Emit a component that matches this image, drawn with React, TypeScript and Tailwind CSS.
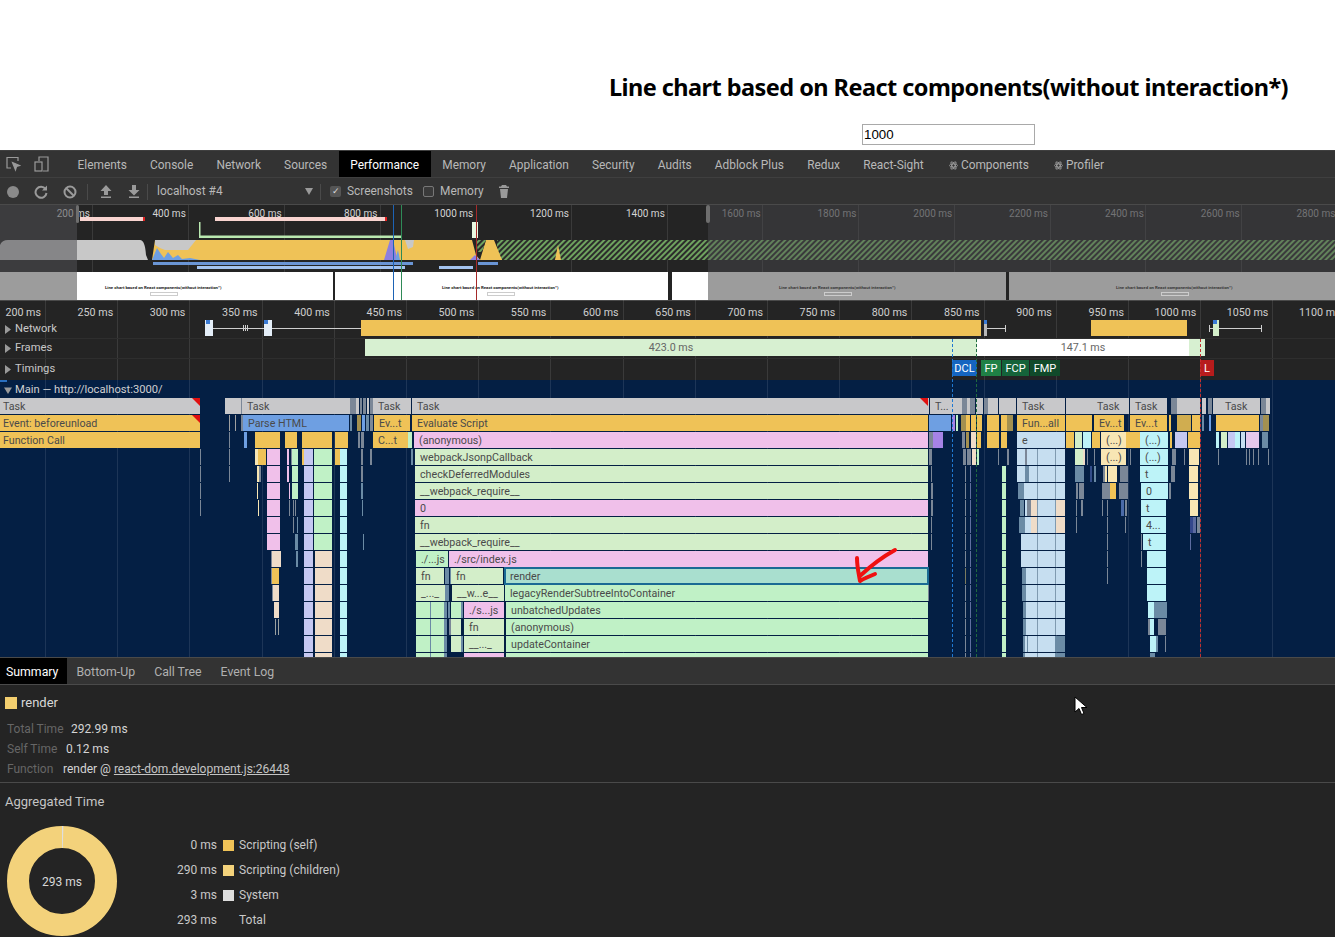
const ORANGE = "#efc257";
const GREY = "#c8c8ca";
const DARK = "#7b8797";
const PINK = "#f0c0ea";
const LEAF = "#d3eec9";
const MINT = "#c0f1c6";
const CYAN = "#bdf3f8";
const SKY = "#c6def0";
const LAV = "#c5c8f2";
const PEACH = "#efdcc8";
const CREAM = "#f8e6b4";
const BLUE = "#6e9fe2";
const PURPLE = "#a583e6";
const SLATE = "#6b8ba5";

type Bar = [number, number, string, string?];

function bars(from: number, to: number, list: Bar[]) {
  const out: Record<number, Bar[]> = {};
  for (let r = from; r <= to; r++) out[r] = list;
  return out;
}

const columns: Record<number, Bar[]>[] = [
  bars(3, 15, [
    [304, 9, LAV],
    [340, 7, CYAN],
    [1025, 40, SKY],
    [1037, 1, "#7f9ab0"],
    [1055, 1, "#7f9ab0"],
  ]),
  bars(3, 8, [
    [267, 13, PINK],
    [314, 18, MINT],
  ]),
  bars(9, 15, [[315, 17, PEACH]]),
  bars(4, 15, [
    [1002, 4, MINT],
    [965, 1, DARK],
    [970, 1, "#5f6f9f"],
  ]),
  bars(11, 15, [
    [416, 29, MINT],
    [430, 1, SLATE],
    [444, 3, SLATE],
  ]),
];

const flame: Record<number, Bar[]> = {
  0: [
    [0, 200, GREY, "Task"],
    [225, 16, GREY],
    [241, 1, DARK],
    [242, 108, GREY, "Task"],
    [350, 6, DARK],
    [356, 3, GREY],
    [360, 2, DARK],
    [363, 3, DARK],
    [367, 2, GREY],
    [370, 3, DARK],
    [373, 38, GREY, "Task"],
    [412, 517, GREY, "Task"],
    [930, 21, GREY, "T..."],
    [951, 11, GREY],
    [962, 5, DARK],
    [967, 3, GREY],
    [970, 5, DARK],
    [976, 7, GREY],
    [984, 4, DARK],
    [988, 10, GREY],
    [999, 17, GREY],
    [1017, 48, GREY, "Task"],
    [1066, 26, GREY],
    [1092, 37, GREY, "Task"],
    [1130, 37, GREY, "Task"],
    [1171, 6, DARK],
    [1177, 23, GREY],
    [1202, 4, GREY],
    [1208, 4, DARK],
    [1213, 7, GREY],
    [1220, 40, GREY, "Task"],
    [1261, 5, DARK],
    [1266, 4, GREY],
  ],
  1: [
    [0, 200, ORANGE, "Event: beforeunload"],
    [229, 1, "#a0a0a0"],
    [235, 1, "#a0a0a0"],
    [241, 2, DARK],
    [243, 106, BLUE, "Parse HTML"],
    [350, 2, SLATE],
    [357, 4, "#a39050"],
    [362, 3, BLUE],
    [366, 3, SLATE],
    [370, 3, DARK],
    [374, 36, ORANGE, "Ev...t"],
    [412, 516, ORANGE, "Evaluate Script"],
    [929, 22, BLUE],
    [952, 3, PURPLE],
    [956, 2, MINT],
    [961, 5, "#a39050"],
    [966, 4, ORANGE],
    [971, 5, ORANGE],
    [977, 5, ORANGE],
    [987, 12, ORANGE],
    [1001, 6, ORANGE],
    [1007, 6, "#a39050"],
    [1017, 48, ORANGE, "Fun...all"],
    [1066, 26, ORANGE],
    [1094, 30, ORANGE, "Ev...t"],
    [1130, 37, ORANGE, "Ev...t"],
    [1169, 2, ORANGE],
    [1177, 14, "#d0ad50"],
    [1192, 8, ORANGE],
    [1202, 2, SLATE],
    [1209, 2, BLUE],
    [1216, 3, ORANGE],
    [1219, 40, ORANGE],
    [1260, 3, DARK],
    [1263, 6, "#a39050"],
  ],
  2: [
    [0, 200, ORANGE, "Function Call"],
    [229, 1, DARK],
    [244, 3, BLUE],
    [255, 25, ORANGE],
    [285, 12, ORANGE],
    [302, 30, ORANGE],
    [335, 13, ORANGE],
    [358, 2, DARK],
    [361, 3, DARK],
    [373, 35, ORANGE, "C...t"],
    [408, 4, MINT],
    [414, 514, PINK, "(anonymous)"],
    [929, 4, DARK],
    [933, 10, PURPLE],
    [962, 3, DARK],
    [966, 3, "#a39050"],
    [971, 5, PEACH],
    [977, 4, ORANGE],
    [987, 12, ORANGE],
    [1001, 6, ORANGE],
    [1017, 48, SKY, "e"],
    [1066, 8, ORANGE],
    [1075, 7, LEAF],
    [1083, 8, CYAN],
    [1092, 8, ORANGE],
    [1101, 25, CREAM, "(...)"],
    [1126, 14, ORANGE],
    [1140, 28, CYAN, "(...)"],
    [1170, 2, ORANGE],
    [1175, 12, LAV],
    [1188, 12, ORANGE],
    [1216, 3, CYAN],
    [1221, 6, LEAF],
    [1228, 7, LAV],
    [1235, 5, CYAN],
    [1241, 4, SKY],
    [1246, 13, "#e4c8ec"],
    [1262, 6, SLATE],
  ],
  3: [
    [255, 11, CREAM],
    [258, 2, ORANGE],
    [260, 6, ORANGE],
    [200, 1, DARK],
    [229, 1, DARK],
    [287, 2, PINK],
    [291, 1, DARK],
    [292, 6, MINT],
    [302, 2, ORANGE],
    [335, 5, ORANGE],
    [361, 2, DARK],
    [370, 2, DARK],
    [411, 2, SLATE],
    [415, 513, LEAF, "webpackJsonpCallback"],
    [929, 3, DARK],
    [963, 3, DARK],
    [967, 4, DARK],
    [972, 4, PEACH],
    [977, 2, MINT],
    [998, 1, DARK],
    [1007, 2, DARK],
    [1017, 8, SKY],
    [1025, 2, DARK],
    [1075, 8, LEAF],
    [1083, 2, PEACH],
    [1087, 1, DARK],
    [1094, 1, DARK],
    [1101, 25, CREAM, "(...)"],
    [1130, 1, DARK],
    [1140, 28, CYAN, "(...)"],
    [1172, 4, DARK],
    [1184, 1, DARK],
    [1189, 10, CREAM],
    [1218, 1, DARK],
    [1246, 1, DARK],
    [1249, 1, DARK],
    [1253, 1, DARK],
    [1258, 1, DARK],
    [1268, 1, DARK],
  ],
  4: [
    [200, 1, DARK],
    [229, 1, DARK],
    [257, 2, CREAM],
    [259, 2, DARK],
    [287, 2, PINK],
    [292, 6, MINT],
    [361, 2, DARK],
    [415, 513, LEAF, "checkDeferredModules"],
    [931, 1, DARK],
    [1017, 8, SKY],
    [1025, 4, SLATE],
    [1075, 9, SLATE],
    [1090, 2, "#334d8a"],
    [1094, 2, SLATE],
    [1103, 2, DARK],
    [1105, 2, CREAM],
    [1108, 9, CREAM],
    [1120, 8, DARK],
    [1140, 28, CYAN, "t"],
    [1171, 4, DARK],
    [1189, 9, CREAM],
  ],
  5: [
    [200, 1, DARK],
    [257, 1, CREAM],
    [289, 1, PINK],
    [292, 6, MINT],
    [361, 2, SLATE],
    [415, 513, LEAF, "__webpack_require__"],
    [931, 2, DARK],
    [1018, 6, SLATE],
    [1024, 3, SKY],
    [1076, 2, DARK],
    [1079, 5, DARK],
    [1102, 8, DARK],
    [1110, 6, ORANGE],
    [1119, 9, DARK],
    [1141, 27, CYAN, "0"],
    [1169, 2, DARK],
    [1189, 9, CREAM],
  ],
  6: [
    [200, 1, DARK],
    [258, 1, CREAM],
    [289, 1, DARK],
    [293, 1, DARK],
    [295, 1, DARK],
    [362, 1, SLATE],
    [415, 513, PINK, "0"],
    [931, 2, DARK],
    [1020, 4, SLATE],
    [1027, 4, DARK],
    [1031, 6, PEACH],
    [1056, 9, PEACH],
    [1076, 1, DARK],
    [1081, 2, DARK],
    [1102, 1, DARK],
    [1107, 1, DARK],
    [1121, 3, "#4a6aa8"],
    [1125, 2, DARK],
    [1141, 25, CYAN, "t"],
    [1190, 8, CREAM],
  ],
  7: [
    [293, 1, DARK],
    [297, 1, SLATE],
    [415, 513, LEAF, "fn"],
    [931, 1, DARK],
    [1019, 6, SLATE],
    [1031, 6, PEACH],
    [1056, 9, PEACH],
    [1076, 1, DARK],
    [1107, 1, DARK],
    [1125, 1, DARK],
    [1141, 25, CYAN, "4..."],
    [1190, 3, "#34478c"],
    [1193, 3, "#5d6ca0"],
    [1197, 3, DARK],
  ],
  8: [
    [267, 4, PINK],
    [295, 3, SLATE],
    [363, 1, SLATE],
    [415, 513, LEAF, "__webpack_require__"],
    [931, 1, DARK],
    [1021, 4, SKY],
    [1107, 1, DARK],
    [1141, 1, DARK],
    [1143, 23, CYAN, "t"],
    [1190, 1, "#5d6ca0"],
  ],
  9: [
    [271, 10, PEACH],
    [271, 1, DARK],
    [296, 2, SLATE],
    [416, 32, MINT, "./...js"],
    [449, 479, PINK, "./src/index.js"],
    [1021, 5, SKY],
    [1107, 1, DARK],
    [1147, 19, CYAN],
    [1141, 1, DARK],
  ],
  10: [
    [271, 1, DARK],
    [272, 7, ORANGE],
    [416, 28, LEAF, "fn"],
    [445, 4, SLATE],
    [450, 1, SLATE],
    [451, 52, LEAF, "fn"],
    [505, 424, "#a9dfcf", "render"],
    [965, 1, "#7b7b60"],
    [1022, 4, SLATE],
    [1107, 1, DARK],
    [1147, 19, CYAN],
  ],
  11: [
    [272, 1, DARK],
    [273, 6, PEACH],
    [416, 29, LEAF, "_..._"],
    [445, 4, SLATE],
    [452, 52, LEAF, "__w...e__"],
    [505, 423, MINT, "legacyRenderSubtreeIntoContainer"],
    [928, 1, DARK],
    [1022, 4, SLATE],
    [1147, 19, CYAN],
  ],
  12: [
    [274, 5, PEACH],
    [448, 2, SLATE],
    [451, 10, MINT],
    [461, 2, SLATE],
    [464, 40, PINK, "./s...js"],
    [506, 422, MINT, "unbatchedUpdates"],
    [1023, 3, SLATE],
    [1148, 6, CYAN],
    [1154, 13, SLATE],
  ],
  13: [
    [275, 1, "#9aa0a0"],
    [278, 1, "#9aa0a0"],
    [449, 2, DARK],
    [451, 10, LEAF],
    [464, 40, LEAF, "fn"],
    [506, 422, MINT, "(anonymous)"],
    [1023, 3, SLATE],
    [1148, 2, DARK],
    [1150, 4, CYAN],
    [1158, 8, DARK],
  ],
  14: [
    [451, 10, LEAF],
    [461, 2, SLATE],
    [464, 40, LEAF, "__..._"],
    [506, 422, MINT, "updateContainer"],
    [1023, 2, SLATE],
    [1027, 1, SLATE],
    [1150, 6, CYAN],
    [1156, 2, SLATE],
    [1165, 1, DARK],
    [1055, 10, SLATE],
  ],
  15: [
    [464, 40, PINK],
    [506, 422, MINT],
    [1023, 2, SLATE],
    [1150, 5, SLATE],
    [1055, 10, SLATE],
  ],
};

const flameRows = Array.from({ length: 16 }, (_, r) => [
  ...columns.flatMap((c) => c[r] ?? []),
  ...flame[r],
]);

const tabs = [
  "Elements",
  "Console",
  "Network",
  "Sources",
  "Performance",
  "Memory",
  "Application",
  "Security",
  "Audits",
  "Adblock Plus",
  "Redux",
  "React-Sight",
];

const rulerMs = [200, 250, 300, 350, 400, 450, 500, 550, 600, 650, 700, 750, 800, 850, 900, 950, 1000, 1050, 1100];
const overviewMs = [200, 400, 600, 800, 1000, 1200, 1400, 1600, 1800, 2000, 2200, 2400, 2600, 2800];

// x, width, top, height, colour inside the Network track
const networkParts: [number, number, number, number, string][] = [
  [205, 8, 0, 16, "#e4eef8"],
  [206, 4, 0, 4, "#3a7bd5"],
  [213, 148, 8, 1, "#cfcfcf"],
  [243, 1, 5, 6, "#cfcfcf"],
  [245, 1, 5, 6, "#cfcfcf"],
  [247, 1, 5, 6, "#cfcfcf"],
  [264, 8, 0, 16, "#e4eef8"],
  [264, 4, 0, 4, "#3a7bd5"],
  [361, 620, 0, 16, ORANGE],
  [984, 3, 0, 16, "#b8b8b8"],
  [984, 3, 0, 4, "#3a7bd5"],
  [987, 19, 8, 1, "#cfcfcf"],
  [1005, 1, 5, 7, "#cfcfcf"],
  [1091, 96, 0, 16, ORANGE],
  [1209, 52, 8, 1, "#cfcfcf"],
  [1209, 1, 5, 7, "#cfcfcf"],
  [1261, 1, 5, 7, "#cfcfcf"],
  [1213, 6, 0, 16, LEAF],
  [1213, 4, 0, 4, "#3a7bd5"],
];

const frameParts: [number, number, string, string][] = [
  [365, 612, "#d7f0d1", "423.0 ms"],
  [977, 212, "#ffffff", "147.1 ms"],
  [1189, 16, "#d7f0d1", ""],
];

const timingMarks: [number, number, string, string][] = [
  [952, 25, "#1565c0", "DCL"],
  [981, 20, "#1f8045", "FP"],
  [1002, 27, "#14633a", "FCP"],
  [1030, 30, "#104a2a", "FMP"],
  [1200, 14, "#b71c1c", "L"],
];

const cornerFlags = [
  [192, 0],
  [192, 17],
  [920, 0],
];

const thumbs = [
  { left: 0, width: 77, text: -1, dim: true },
  { left: 77, width: 256, text: 28, dim: false },
  { left: 335, width: 333, text: 107, dim: false },
  { left: 672, width: 36, text: -1, dim: false },
  { left: 708, width: 298, text: 71, dim: true },
  { left: 1009, width: 326, text: 107, dim: true },
];

function Caret({ open }: { open?: boolean }) {
  return (
    <svg width="8" height="9" viewBox="0 0 8 9" className="shrink-0">
      <path d={open ? "M0 1.5h8L4 8z" : "M1 0l6 4.5L1 9z"} fill="#9a9a9a" />
    </svg>
  );
}

function Thumb({ left, width, text, dim }: { left: number; width: number; text: number; dim: boolean }) {
  return (
    <div
      className={`absolute top-[67px] h-[28px] overflow-hidden ${dim ? "bg-[#9c9c9c]" : "bg-white"}`}
      style={{ left, width }}
    >
      {text >= 0 && (
        <div className="flex flex-col items-start pt-[13px]" style={{ paddingLeft: text }}>
          <div className={`text-[4.3px] leading-[5px] font-bold whitespace-nowrap ${dim ? "text-[#3a3a3a]" : "text-[#222]"}`}>
            Line chart based on React components(without interaction*)
          </div>
          <div className="mt-[2px] ml-[45px] h-[4px] w-[28px] border border-[#ccc]" />
        </div>
      )}
    </div>
  );
}

function Overview() {
  return (
    <div className="relative h-[95px] overflow-hidden bg-[#242424]">
      {/* cpu chart */}
      <svg className="absolute left-0 top-0" width="1335" height="95" viewBox="0 205 1335 95">
        <defs>
          <pattern id="hatch" width="4" height="4" patternUnits="userSpaceOnUse" patternTransform="rotate(45)">
            <rect width="4" height="4" fill="#2b2b2b" />
            <rect width="2" height="4" fill="#6fa35f" />
          </pattern>
        </defs>
        {[92, 188, 284, 380, 476, 571, 667, 762, 858, 954, 1050, 1145, 1241].map((x) => (
          <line key={x} x1={x + 0.5} x2={x + 0.5} y1="205" y2="272" stroke="#3a3a3a" />
        ))}
        <rect x="497" y="240" width="838" height="20" fill="url(#hatch)" />
        <path d="M0 245Q2 240 8 240H140Q145 240 146 255L148 260H0Z" fill="#c8c8c8" />
        <path d="M152 260L155 240H472L476 255L480 260L486 240H494L500 255L502 260Z" fill={ORANGE} />
        <path d="M155 240V245L160 248L165 250H188L196 240Z" fill="#c8c8c8" />
        <path d="M405 240H414L413 247L408 249Z" fill="#c8c8c8" />
        <path d="M476 240H486L482 252L478 252Z" fill="url(#hatch)" />
        <path d="M152 260L157 248L161 254L164 258L168 252L173 258L178 255L182 259L190 258L200 260Z" fill="#6e9fe2" />
        <path d="M384 260L390 240H393L397 258L398 260Z" fill="#8d7fe0" />
        <path d="M395 260L398 250L400 260Z" fill="#6e9fe2" />
        <path d="M470 260L475 255L480 260Z" fill="#8d7fe0" />
        <path d="M555 260L558 245L561 260Z" fill={ORANGE} />
        <path d="M497 260L499 256L502 260Z" fill={ORANGE} />
        <rect x="199" y="222" width="1.5" height="15" fill="#b9e8b0" />
        <rect x="199" y="235.5" width="202" height="2.5" fill="#b9e8b0" />
        <rect x="472" y="222" width="6" height="16" fill="#e8f8e0" />
        <rect x="476" y="222" width="1" height="16" fill="#b9e8b0" />
        <rect x="153" y="262" width="260" height="3" fill="#6a95d5" />
        <rect x="197" y="266" width="208" height="3" fill="#a3c3ef" />
        <rect x="439" y="266" width="34" height="3" fill="#a3c3ef" />
        <rect x="478" y="262" width="20" height="3" fill="#6a95d5" />
        <rect x="80" y="217" width="63" height="4" fill="#f8d4d0" />
        <rect x="143" y="217" width="2" height="4" fill="#e02020" />
        <rect x="215" y="217" width="170" height="4" fill="#f8d4d0" />
        <rect x="385" y="217" width="2" height="4" fill="#e02020" />
      </svg>

      {overviewMs.map((ms, i) => (
        <span
          key={ms}
          className={`absolute top-[2px] w-[60px] whitespace-nowrap text-right text-[10px] leading-[14px] ${i > 6 ? "text-[#8a8a8a]" : "text-[#d4d4d4]"}`}
          style={{ left: 30 + i * 95.8 }}
        >
          {ms} ms
        </span>
      ))}

      {thumbs.map((t) => (
        <Thumb key={t.left} {...t} />
      ))}

      {/* unselected range dimming */}
      <div className="absolute left-0 top-0 h-[67px] w-[77px] bg-[rgba(80,80,84,0.55)]" />
      <div className="absolute left-[708px] right-0 top-0 h-[67px] bg-[rgba(80,80,84,0.4)]" />
      <div className="absolute left-[76px] top-0 h-[18px] w-[3px] rounded-sm bg-[#6e6e6e]" />
      <div className="absolute left-[706px] top-0 h-[18px] w-[4px] rounded-sm bg-[#6e6e6e]" />

      <div className="absolute left-[393px] top-0 h-full w-px bg-[#1d63b5]" />
      <div className="absolute left-[401px] top-0 h-full w-px bg-[#2f8a57]" />
      <div className="absolute left-[476px] top-0 h-full w-px bg-[#a52a2a]" />
    </div>
  );
}

function FlameBar({ bar }: { bar: Bar }) {
  const [x, w, color, label] = bar;
  return (
    <div
      className="absolute top-0 h-[16px] overflow-hidden whitespace-nowrap text-[10.7px] leading-[17px] text-[#4a4a4a]"
      style={{ left: x, width: w, backgroundColor: color, paddingLeft: !label ? 0 : x === 0 ? 3 : 5 }}
    >
      {label}
    </div>
  );
}

function GridLines() {
  return (
    <>
      {rulerMs.map((_, i) => (
        <div
          key={i}
          className="absolute top-0 h-full w-px bg-[rgba(255,255,255,0.1)]"
          style={{ left: 45 + i * 72.2 }}
        />
      ))}
    </>
  );
}

function Tracks() {
  return (
    <div className="relative h-[357px] overflow-hidden bg-[#242424]">
      <div className="relative h-[80px] text-[11.2px] text-[#c8c8c8]">
        <GridLines />
        <div className="h-[20px] border-t border-[#4a4a4a]">
          {rulerMs.map((ms, i) => (
            <span
              key={ms}
              className="absolute top-[6px] w-[60px] whitespace-nowrap text-right text-[10.7px] leading-[14px] text-[#cfcfcf]"
              style={{ left: -19 + i * 72.2 }}
            >
              {ms} ms
            </span>
          ))}
        </div>

        <div className="relative flex h-[18px] items-center gap-[3px] pl-[4px]">
          <Caret />
          <span>Network</span>
          {networkParts.map(([x, w, top, h, color], i) => (
            <div key={i} className="absolute" style={{ left: x, width: w, top, height: h, backgroundColor: color }} />
          ))}
        </div>

        <div className="relative flex h-[20px] items-center gap-[3px] border-t border-[#2e2e2e] pb-[1px] pl-[4px]">
          <Caret />
          <span>Frames</span>
          {frameParts.map(([x, w, color, label]) => (
            <div
              key={x}
              className="absolute top-0 flex h-[17px] items-center justify-center pt-[2px] text-[10.7px] text-[#666]"
              style={{ left: x, width: w, backgroundColor: color }}
            >
              {label}
            </div>
          ))}
        </div>

        <div className="relative flex h-[22px] items-center gap-[3px] border-t border-[#2e2e2e] pb-[1px] pl-[4px]">
          <Caret />
          <span>Timings</span>
          {timingMarks.map(([x, w, color, label]) => (
            <div
              key={x}
              className="absolute top-[1px] flex h-[16px] items-center justify-center pt-[2px] text-[11px] text-white"
              style={{ left: x, width: w, backgroundColor: color }}
            >
              {label}
            </div>
          ))}
        </div>
      </div>

      <div className="relative h-[277px] bg-[#041f44]">
        <GridLines />
        <div className="absolute left-0 top-0 h-[2px] w-[7px] bg-[#2a6fc0]" />
        <div className="relative flex h-[18px] items-center gap-[3px] pt-[2px] pl-[4px] text-[11.2px] text-[#d0d0d0]">
          <Caret open />
          <span>Main — http://localhost:3000/</span>
        </div>
        <div className="flex flex-col gap-px">
          {flameRows.map((row, r) => (
            <div key={r} className="relative h-[16px]">
              {row.map((bar, i) => (
                <FlameBar key={i} bar={bar} />
              ))}
            </div>
          ))}
        </div>

        {/* selected entry outline and long task flags */}
        <div className="absolute left-[504px] top-[187px] h-[18px] w-[425px] border-2 border-[#1a6a94]" />
        {cornerFlags.map(([x, y]) => (
          <div
            key={`${x}-${y}`}
            className="absolute h-0 w-0 border-l-[8px] border-t-[8px] border-l-transparent border-t-[#e01010]"
            style={{ left: x, top: 18 + y }}
          />
        ))}
      </div>

      <svg className="absolute left-[850px] top-[245px]" width="50" height="40" viewBox="0 0 50 40">
        <path
          d="M45 5C36 10 25 17 11 30M7 13C7 22 9 30 10 36C15 33 20 31 25 29"
          fill="none"
          stroke="#f01010"
          strokeWidth="4"
          strokeLinecap="round"
          strokeLinejoin="round"
        />
      </svg>

      <div className="absolute left-[952px] top-[39px] bottom-0 border-l border-dashed border-[#1f78d1]" />
      <div className="absolute left-[976px] top-[39px] bottom-0 border-l border-dashed border-[#1f6a3f]" />
      <div className="absolute left-[1200px] top-[39px] bottom-0 border-l border-dashed border-[#c22f2f]" />
    </div>
  );
}

function Donut() {
  const r = 44;
  const c = 2 * Math.PI * r;
  return (
    <div className="relative h-[110px] w-[110px]">
      <svg width="110" height="110" viewBox="0 0 110 110" className="-rotate-90">
        <circle cx="55" cy="55" r={r} fill="none" stroke="#f3d27b" strokeWidth="22" />
        <circle
          cx="55"
          cy="55"
          r={r}
          fill="none"
          stroke="#dedede"
          strokeWidth="22"
          strokeDasharray={`${c * 0.01} ${c}`}
          strokeDashoffset={c * 0.006}
        />
      </svg>
      <span className="absolute inset-0 flex items-center justify-center pt-[2px] text-[12px] text-[#d8d8d8]">293 ms</span>
    </div>
  );
}

const legend = [
  { ms: "0 ms", color: "bg-[#efc257]", label: "Scripting (self)" },
  { ms: "290 ms", color: "bg-[#f3d27b]", label: "Scripting (children)" },
  { ms: "3 ms", color: "bg-[#dedede]", label: "System" },
  { ms: "293 ms", color: "", label: "Total" },
];

function ReactMark() {
  return (
    <svg width="9" height="9" viewBox="0 0 10 10" fill="none" stroke="#9a9a9a" strokeWidth="1">
      <ellipse cx="5" cy="5" rx="4.500" ry="1.800" />
      <ellipse cx="5" cy="5" rx="4.500" ry="1.800" transform="rotate(60 5 5)" />
      <ellipse cx="5" cy="5" rx="4.500" ry="1.800" transform="rotate(120 5 5)" />
    </svg>
  );
}

export default function App() {
  return (
    <div className="relative h-[937px] w-[1335px] overflow-hidden bg-[#242424] font-['Roboto','Noto_Sans',sans-serif] text-[12px]">
      <header className="flex h-[150px] flex-col items-end bg-white pr-[47px] pt-[70px]">
        <h1 className="whitespace-nowrap font-['Noto_Sans',sans-serif] text-[23.5px] leading-[34px] font-bold tracking-[-0.55px] text-black">
          Line chart based on React components(without interaction*)
        </h1>
        <input
          readOnly
          value="1000"
          className="mt-[20px] mr-[253px] h-[21px] w-[173px] border border-[#a9a9a9] px-[1px] font-['Liberation_Sans',sans-serif] text-[13.3px] text-black"
        />
      </header>

      <nav className="flex h-[28px] items-stretch border-t border-b border-[#3f3f3f] bg-[#333333] pl-[66px] text-[11.9px] text-[#b8b8b8]">
        <div className="absolute left-[6px] top-[156px] flex items-center gap-[13px]">
          <svg width="15" height="16" viewBox="0 0 15 16" fill="none" stroke="#9a9a9a" strokeWidth="1.2">
            <path d="M12 5V1.500H1V12h4" />
            <path d="M6.500 6.500l7 3-3 1-1 3.500z" fill="#9a9a9a" />
          </svg>
          <svg width="15" height="16" viewBox="0 0 15 16" fill="none" stroke="#9a9a9a" strokeWidth="1.2">
            <path d="M5 5V1h9v14H9" />
            <rect x="1" y="6" width="7" height="9" />
          </svg>
        </div>
        {tabs.map((t) => (
          <span
            key={t}
            className={`flex items-center px-[11.600px] pt-[3px] whitespace-nowrap ${t === "Performance" ? "bg-black text-white" : ""}`}
          >
            {t}
          </span>
        ))}
        <span className="ml-[2px] flex items-center gap-[3px] px-[11.600px] pt-[3px] whitespace-nowrap">
          <ReactMark />
          Components
        </span>
        <span className="ml-[2px] flex items-center gap-[3px] px-[11.600px] pt-[3px] whitespace-nowrap">
          <ReactMark />
          Profiler
        </span>
      </nav>

      <div className="flex h-[27px] items-center border-b border-[#4a4a4a] bg-[#333333] pt-px text-[11.9px] text-[#b8b8b8]">
        <span className="ml-[7px] h-[12px] w-[12px] rounded-full bg-[#8a8a8a]" />
        <svg className="ml-[15px]" width="14" height="14" viewBox="0 0 14 14" fill="none" stroke="#9a9a9a" strokeWidth="2">
          <path d="M11.500 4A5.500 5.500 0 1 0 12.500 8" />
          <path d="M13 0.500V5.500H8" fill="#9a9a9a" stroke="none" />
        </svg>
        <svg className="ml-[15px]" width="14" height="14" viewBox="0 0 14 14" fill="none" stroke="#9a9a9a" strokeWidth="2">
          <circle cx="7" cy="7" r="5.500" />
          <path d="M3 3l8 8" />
        </svg>
        <span className="ml-[10px] mr-[12px] h-[16px] w-px bg-[#4a4a4a]" />
        <svg width="12" height="13" viewBox="0 0 12 13" fill="#9a9a9a">
          <path d="M6 0l5.500 6H8v4H4V6H.5zM1 11.500h10V13H1z" />
        </svg>
        <svg className="ml-[16px]" width="12" height="13" viewBox="0 0 12 13" fill="#9a9a9a">
          <path d="M4 0h4v5h3.500L6 10.500.5 5H4zM1 11.500h10V13H1z" />
        </svg>
        <span className="ml-[7px] mr-[6px] h-[16px] w-px bg-[#4a4a4a]" />
        <span className="w-[151px] pl-[3px]">localhost #4</span>
        <svg width="8" height="7" viewBox="0 0 8 7">
          <path d="M0 0h8L4 7z" fill="#9a9a9a" />
        </svg>
        <span className="ml-[7px] mr-[9px] h-[16px] w-px bg-[#4a4a4a]" />
        <span className="flex h-[11px] w-[11px] shrink-0 items-center justify-center rounded-[2px] bg-[#555] text-[9px] leading-none text-[#ddd]">✓</span>
        <span className="ml-[6px] w-[64px] whitespace-nowrap">Screenshots</span>
        <span className="ml-[12px] h-[11px] w-[11px] shrink-0 rounded-[2px] border border-[#777] bg-[#3a3a3a]" />
        <span className="ml-[6px] w-[45px]">Memory</span>
        <svg className="ml-[14px]" width="10" height="13" viewBox="0 0 10 13" fill="#9a9a9a">
          <path d="M3 0h4l1 1.500h2V3H0V1.500h2zM1 4h8l-1 9H2z" />
        </svg>
      </div>

      <Overview />
      <Tracks />

      <div className="flex h-[28px] border-t border-b border-[#4a4a4a] bg-[#333333] text-[12.3px] text-[#b0b0b0]">
        <span className="flex items-center bg-black pt-[2px] pr-[9px] pl-[6px] text-white">Summary</span>
        <span className="flex items-center pt-[2px] pl-[9px] pr-[9px]">Bottom-Up</span>
        <span className="flex items-center pt-[2px] px-[10px]">Call Tree</span>
        <span className="flex items-center pt-[2px] px-[9px]">Event Log</span>
      </div>

      <section className="h-[98px] border-b border-[#4a4a4a] pt-px pl-[5px]">
        <div className="flex h-[33px] items-center gap-[4px] text-[13px] text-[#d8d8d8]">
          <span className="h-[12px] w-[12px] bg-[#f3ce6e]" />
          render
        </div>
        <div className="pl-[2px] text-[12px] leading-[20px]">
          <div>
            <span className="inline-block w-[64px] text-[#666]">Total Time</span>
            <span className="text-[#d4d4d4]">292.99 ms</span>
          </div>
          <div>
            <span className="inline-block w-[59px] text-[#666]">Self Time</span>
            <span className="text-[#d4d4d4]">0.12 ms</span>
          </div>
          <div>
            <span className="inline-block w-[56px] text-[#666]">Function</span>
            <span className="text-[#d4d4d4]">render @ </span>
            <span className="text-[#c4c4c4] underline">react-dom.development.js:26448</span>
          </div>
        </div>
      </section>

      <section className="pl-[5px]">
        <div className="pt-[10px] text-[13px] leading-[18px] text-[#c4c4c4]">Aggregated Time</div>
        <div className="mt-[15px] flex items-start">
          <div className="ml-[2px]">
            <Donut />
          </div>
          <div className="mt-[7px] ml-[45px] flex flex-col text-[12px] leading-[25px] text-[#c8c8c8]">
            {legend.map((l) => (
              <div key={l.label} className="flex items-center">
                <span className="w-[55px] text-right">{l.ms}</span>
                <span className={`ml-[6px] h-[11px] w-[11px] ${l.color}`} />
                <span className="ml-[5px] whitespace-nowrap">{l.label}</span>
              </div>
            ))}
          </div>
        </div>
      </section>

      <svg className="absolute left-[1074px] top-[696px]" width="14" height="20" viewBox="0 0 14 20">
        <path d="M1 1v15l4-3.500 2.500 6 2.500-1-2.500-6H13z" fill="#fff" stroke="#000" />
      </svg>
    </div>
  );
}
